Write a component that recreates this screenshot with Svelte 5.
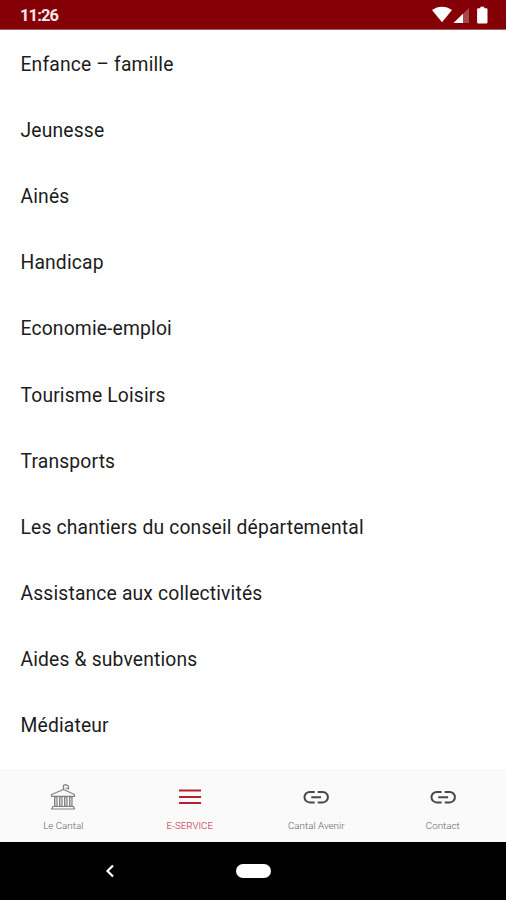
<script>
	const services = [
		'Enfance – famille',
		'Jeunesse',
		'Ainés',
		'Handicap',
		'Economie-emploi',
		'Tourisme Loisirs',
		'Transports',
		'Les chantiers du conseil départemental',
		'Assistance aux collectivités',
		'Aides & subventions',
		'Médiateur'
	];

	const tabs = [
		{ label: 'Le Cantal', icon: 'building' },
		{ label: 'E-SERVICE', icon: 'menu' },
		{ label: 'Cantal Avenir', icon: 'link' },
		{ label: 'Contact', icon: 'link' }
	];

	let active = $state('E-SERVICE');
</script>

<div class="screen">
	<header class="status">
		<span class="status__time">11:26</span>
		<svg class="status__icons" width="60" height="20" viewBox="0 0 60 20">
			<path d="M0 5.1C6 .6 14 .6 20 5.1L10 17.3Z" fill="#fff" />
			<path d="M37 3V18H21.5Z" fill="#a8484c" />
			<path d="M31 8.7V18H21.5Z" fill="#fff" />
			<path d="M48.4 3.3h-2.1q-1.2 0-1.2 1.2v12.7q0 1.2 1.2 1.2h8q1.2 0 1.2-1.2v-12.7q0-1.2-1.2-1.2h-2.1v-1.6h-3.8z" fill="#fff" />
		</svg>
	</header>

	<ul class="list">
		{#each services as service}
			<li class="list__item">{service}</li>
		{/each}
	</ul>

	<nav class="tabs">
		{#each tabs as tab}
			<button class="tab" class:tab--active={active === tab.label} onclick={() => (active = tab.label)}>
				<svg class="tab__icon" width="28" height="28" viewBox="0 0 28 28" fill="none">
					{#if tab.icon === 'building'}
						<g stroke="#808080" stroke-width="1.2" stroke-linejoin="round">
							<path d="M14.5 6.5V2.2L16.5 1.6L19.5 3V6L16.5 5" />
							<path d="M2.5 13.3V11.5L14.5 6.5L25.500 11.5V13.3Z" />
							<path d="M4 23.5H24.5L25.5 26H2.5Z" />
						</g>
						<path d="M5.5 14h2.6v9H5.500ZM10.5 14h2.6v9H10.5ZM15.5 14h2.6v9H15.5ZM20.5 14h2.6v9H20.5Z" fill="#c4c4c4" stroke="#858585" />
					{:else if tab.icon === 'menu'}
						<path d="M3 7.5H25M3 14H25M3 20H25" stroke="#b71f2b" stroke-width="2.2" />
					{:else}
						<path
							d="M12.7 9H7.700a5 5 0 0 0 0 10.400H12.700M15.700 9H20.700a5 5 0 0 1 0 10.400H15.700M9.300 14.200H19.100"
							stroke="#484848"
							stroke-width="2"
						/>
					{/if}
				</svg>
				<span class="tab__label">{tab.label}</span>
			</button>
		{/each}
	</nav>

	<footer class="system">
		<svg class="system__back" width="10" height="14" viewBox="0 0 10 14">
			<path d="M8 1.5L2.5 7L8 12.5" fill="none" stroke="#fff" stroke-width="2.2" />
		</svg>
		<span class="system__home"></span>
	</footer>
</div>

<style>
	:global(body) {
		background: #fff;
	}

	.screen {
		display: flex;
		flex-direction: column;
		height: 900px;
		overflow: hidden;
		font-family: Roboto, sans-serif;
		color: #1c1c1c;
	}

	.status {
		display: flex;
		flex: none;
		justify-content: space-between;
		box-sizing: border-box;
		height: 30px;
		padding: 5px 14px 0 20px;
		background: #850006;
		border-bottom: 1px solid #a95f62;
	}

	.status__time {
		font-size: 16.5px;
		font-weight: 700;
		line-height: 21px;
		letter-spacing: -0.9px;
		color: #f8e9e9;
	}

	.list {
		flex: 1;
		margin: 0;
		padding: 1.5px 0 0;
		list-style: none;
	}

	.list__item {
		display: flex;
		align-items: center;
		height: 66.1px;
		padding-left: 20.5px;
		font-size: 19.3px;
		letter-spacing: 0.16px;
	}

	.tabs {
		display: grid;
		flex: none;
		grid-template-columns: repeat(4, 1fr);
		height: 73px;
		background: #fafafa;
	}

	.tab {
		display: flex;
		flex-direction: column;
		align-items: center;
		padding: 14px 0 0;
		border: 0;
		background: none;
		font-family: inherit;
		color: #666;
	}

	.tab__label {
		margin-top: 8px;
		font-size: 9.8px;
		font-weight: 300;
		line-height: 13px;
	}

	.tab--active {
		color: #c2183c;
	}

	.system {
		display: grid;
		flex: none;
		grid-template-columns: 220px 67px;
		align-items: center;
		justify-items: center;
		height: 58px;
		background: #000;
	}

	.system__home {
		width: 35px;
		height: 14px;
		border-radius: 7px;
		background: #fff;
	}
</style>
